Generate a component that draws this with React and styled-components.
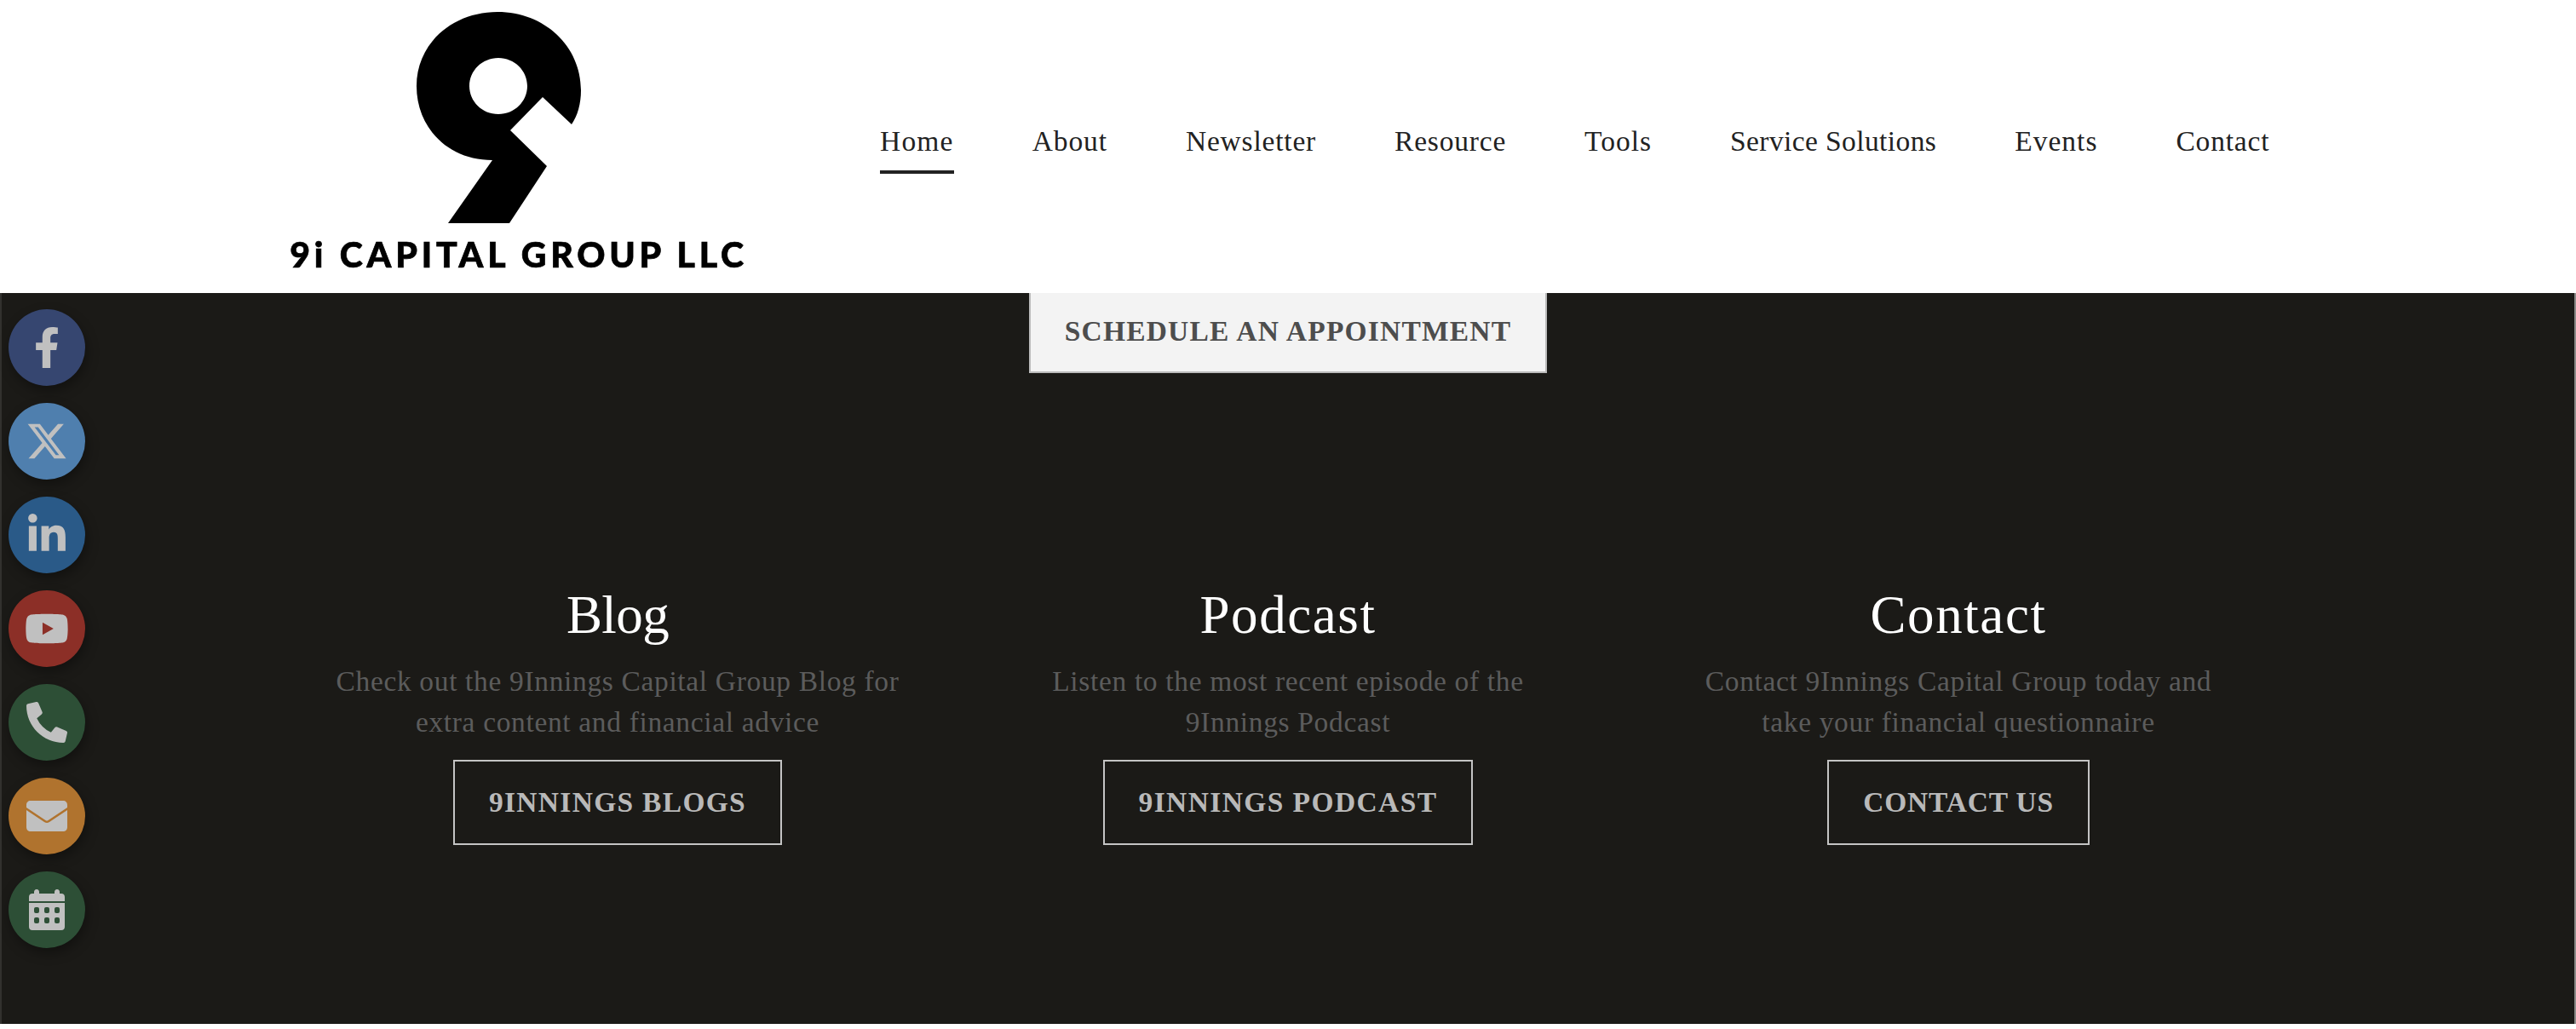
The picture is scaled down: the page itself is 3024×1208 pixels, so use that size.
import React from 'react';
import styled, { createGlobalStyle } from 'styled-components';
import { FaFacebookF, FaLinkedinIn, FaYoutube, FaPhoneAlt } from 'react-icons/fa';
import { FaXTwitter } from 'react-icons/fa6';

const NAV_ITEMS = [
  { label: 'Home', spacing: 1.2 },
  { label: 'About', spacing: 0.9 },
  { label: 'Newsletter', spacing: 0.8 },
  { label: 'Resource', spacing: 0.8 },
  { label: 'Tools', spacing: 1 },
  { label: 'Service Solutions', spacing: 0.4 },
  { label: 'Events', spacing: 1 },
  { label: 'Contact', spacing: 0.8 },
];

const CARDS = [
  {
    title: 'Blog',
    titleSpacing: -0.6,
    lines: ['Check out the 9Innings Capital Group Blog for', 'extra content and financial advice'],
    cta: '9INNINGS BLOGS',
    ctaSpacing: 1.3,
  },
  {
    title: 'Podcast',
    titleSpacing: 1.6,
    lines: ['Listen to the most recent episode of the', '9Innings Podcast'],
    cta: '9INNINGS PODCAST',
    ctaSpacing: 1.4,
  },
  {
    title: 'Contact',
    titleSpacing: 1.6,
    lines: ['Contact 9Innings Capital Group today and', 'take your financial questionnaire'],
    cta: 'CONTACT US',
    ctaSpacing: 0.8,
  },
];

const MailIcon = () => (
  <svg viewBox="0 0 48 36" fill="currentColor">
    <path d="M5 0H43C46 0 48 2 48 5V8L25.5 23C24.5 23.7 23.5 23.7 22.5 23L0 8V5C0 2 2 0 5 0Z" />
    <path d="M0 11L21 25C23 26.4 25 26.4 27 25L48 11V31C48 34 46 36 43 36H5C2 36 0 34 0 31Z" />
  </svg>
);

const CalendarIcon = () => (
  <svg viewBox="0 0 42 48" fill="currentColor">
    <path d="M9 0C11 0 12 1.5 12 3V5H30V3C30 1.5 31 0 33 0C35 0 36 1.5 36 3V5H38C40.5 5 42 6.5 42 9V14H0V9C0 6.5 1.5 5 4 5H6V3C6 1.5 7 0 9 0Z" />
    <path
      fillRule="evenodd"
      d="M0 16H42V44C42 46.5 40.5 48 38 48H4C1.5 48 0 46.5 0 44ZM8 21A2 2 0 0 0 6 23V26A2 2 0 0 0 8 28H10A2 2 0 0 0 12 26V23A2 2 0 0 0 10 21ZM20 21A2 2 0 0 0 18 23V26A2 2 0 0 0 20 28H22A2 2 0 0 0 24 26V23A2 2 0 0 0 22 21ZM32 21A2 2 0 0 0 30 23V26A2 2 0 0 0 32 28H34A2 2 0 0 0 36 26V23A2 2 0 0 0 34 21ZM8 33A2 2 0 0 0 6 35V38A2 2 0 0 0 8 40H10A2 2 0 0 0 12 38V35A2 2 0 0 0 10 33ZM20 33A2 2 0 0 0 18 35V38A2 2 0 0 0 20 40H22A2 2 0 0 0 24 38V35A2 2 0 0 0 22 33ZM32 33A2 2 0 0 0 30 35V38A2 2 0 0 0 32 40H34A2 2 0 0 0 36 38V35A2 2 0 0 0 34 33Z"
    />
  </svg>
);

const SOCIALS = [
  { name: 'facebook', color: '#364670', Icon: FaFacebookF, width: 30, height: 48 },
  { name: 'x', color: '#4f7fae', Icon: FaXTwitter, width: 50, height: 50 },
  { name: 'linkedin', color: '#2a5a88', Icon: FaLinkedinIn, width: 50, height: 50 },
  { name: 'youtube', color: '#8c2f27', Icon: FaYoutube, width: 52, height: 52 },
  { name: 'phone', color: '#2d4f36', Icon: FaPhoneAlt, width: 48, height: 48 },
  { name: 'mail', color: '#b0732e', Icon: MailIcon, width: 48, height: 36 },
  { name: 'calendar', color: '#2d4f36', Icon: CalendarIcon, width: 42, height: 48 },
];

const App = () => {
  return (
    <Page>
      <GlobalStyle />
      <Header>
        <Logo>
          <LogoMark viewBox="0 0 193 248" aria-hidden="true">
            <path
              fillRule="evenodd"
              d="M95 0C150 0 193 40 193 92C193 108 189 122 182 132L148 100L110 139L153 181L109 248H37L89 174C36 174 0 135 0 87C0 37 42 0 95 0ZM96 54C77 54 62 69 62 87C62 105 77 120 96 120C115 120 130 105 130 87C130 69 115 54 96 54Z"
            />
          </LogoMark>
          <LogoName>9i CAPITAL GROUP LLC</LogoName>
        </Logo>
        <Nav>
          {NAV_ITEMS.map(({ label, spacing }, i) => (
            <NavLink key={label} $active={i === 0} $spacing={spacing}>{label}</NavLink>
          ))}
        </Nav>
      </Header>
      <Main>
        <Schedule>SCHEDULE AN APPOINTMENT</Schedule>
        <Cards>
          {CARDS.map((card) => (
            <Card key={card.title}>
              <CardTitle $spacing={card.titleSpacing}>{card.title}</CardTitle>
              <CardText>
                {card.lines.map((line) => (
                  <span key={line}>{line}</span>
                ))}
              </CardText>
              <CardButton $spacing={card.ctaSpacing}>{card.cta}</CardButton>
            </Card>
          ))}
        </Cards>
      </Main>
      <SocialBar>
        {SOCIALS.map(({ name, color, Icon, width, height }) => (
          <SocialLink key={name} $color={color} $width={width} $height={height} aria-label={name}>
            <Icon />
          </SocialLink>
        ))}
      </SocialBar>
    </Page>
  );
};

const GlobalStyle = createGlobalStyle`
  html, body {
    margin: 0;
    background: #fff;
  }
  * {
    box-sizing: border-box;
  }
`;

const Page = styled.div`
  position: relative;
  width: 3024px;
  height: 1208px;
  overflow: hidden;
  font-family: 'Liberation Serif', 'Times New Roman', serif;
`;

const Header = styled.header`
  height: 344px;
  background: #fff;
  display: flex;
  align-items: flex-start;
  padding-left: 342px;
`;

const Logo = styled.div`
  width: 534px;
  padding-top: 14px;
  display: flex;
  flex-direction: column;
  align-items: center;
  filter: blur(0.7px);
`;

const LogoMark = styled.svg`
  width: 193px;
  height: 248px;
  margin-left: -47px;
  fill: #000;
  flex: none;
`;

const LogoName = styled.div`
  margin-top: 19px;
  font-family: Lato, 'Noto Sans', sans-serif;
  font-weight: 900;
  font-size: 41px;
  line-height: 36px;
  letter-spacing: 4.8px;
  white-space: nowrap;
  color: #000;
  -webkit-text-stroke: 0.7px #000;
`;

const Nav = styled.nav`
  display: flex;
  gap: 92px;
  margin-left: 157px;
  padding-top: 146px;
`;

const NavLink = styled.a`
  height: 58px;
  font-size: 33.5px;
  line-height: 40px;
  letter-spacing: ${(props) => props.$spacing}px;
  color: #222;
  white-space: nowrap;
  border-bottom: 4px solid ${(props) => (props.$active ? '#222' : 'transparent')};
`;

const Main = styled.main`
  height: 858px;
  background: #1b1a17;
  border-left: 2px solid #32312e;
  border-right: 2px solid #8a8a88;
  display: flex;
  flex-direction: column;
  align-items: center;
`;

const Schedule = styled.a`
  width: 608px;
  height: 94px;
  padding-bottom: 3px;
  background: #f3f3f3;
  border: 2px solid #bbb;
  border-top: none;
  display: flex;
  align-items: center;
  justify-content: center;
  font-size: 33.5px;
  font-weight: 700;
  letter-spacing: 1.2px;
  color: #4d4d4d;
  white-space: nowrap;
`;

const Cards = styled.div`
  margin-top: 244px;
  display: grid;
  grid-template-columns: repeat(3, 787px);
`;

const Card = styled.section`
  display: flex;
  flex-direction: column;
  align-items: center;
`;

const CardTitle = styled.h2`
  margin: 0;
  font-size: 63px;
  line-height: 80px;
  font-weight: 400;
  letter-spacing: ${(props) => props.$spacing}px;
  color: #fff;
`;

const CardText = styled.p`
  margin: 14px 0 0;
  display: flex;
  flex-direction: column;
  align-items: center;
  font-size: 33.5px;
  line-height: 48px;
  letter-spacing: 0.65px;
  color: #5c5c5c;
  white-space: nowrap;
`;

const CardButton = styled.a`
  margin-top: 20px;
  height: 100px;
  padding: 0 40px;
  border: 2px solid #c4c4c4;
  display: flex;
  align-items: center;
  font-size: 33.5px;
  font-weight: 700;
  letter-spacing: ${(props) => props.$spacing}px;
  color: #b9b9b9;
  white-space: nowrap;
`;

const SocialBar = styled.aside`
  position: absolute;
  left: 10px;
  top: 363px;
  display: flex;
  flex-direction: column;
  gap: 20px;
`;

const SocialLink = styled.a`
  width: 90px;
  height: 90px;
  border-radius: 50%;
  background: ${(props) => props.$color};
  box-shadow: 2px 6px 14px rgba(0, 0, 0, 0.35);
  display: flex;
  align-items: center;
  justify-content: center;
  color: #c0c0c0;

  svg {
    width: ${(props) => props.$width}px;
    height: ${(props) => props.$height}px;
  }
`;

export default App;
